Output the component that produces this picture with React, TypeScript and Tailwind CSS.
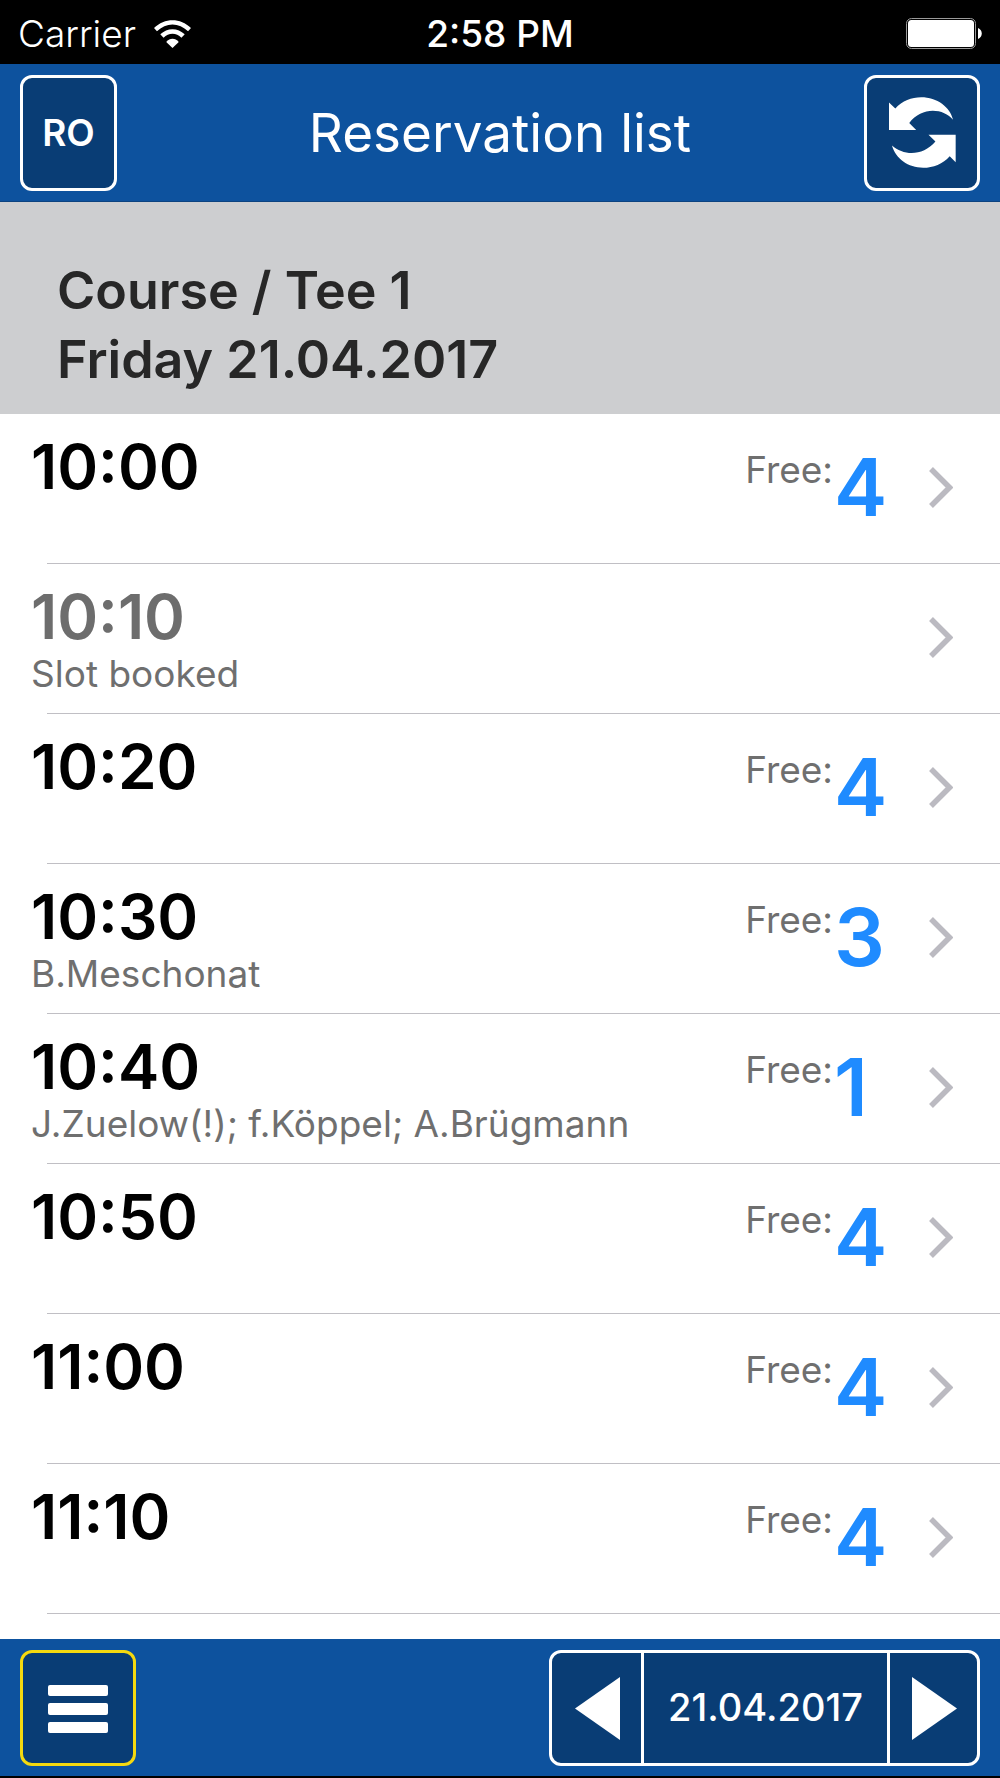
type Slot = { time: string; note?: string; free?: number; booked?: boolean };

const slots: Slot[] = [
  { time: "10:00", free: 4 },
  { time: "10:10", note: "Slot booked", booked: true },
  { time: "10:20", free: 4 },
  { time: "10:30", note: "B.Meschonat", free: 3 },
  { time: "10:40", note: "J.Zuelow(!); f.Köppel; A.Brügmann", free: 1 },
  { time: "10:50", free: 4 },
  { time: "11:00", free: 4 },
  { time: "11:10", free: 4 },
];

function WifiIcon() {
  return (
    <svg viewBox="0 0 112 84" className="h-7 w-[37px]" fill="currentColor" aria-hidden="true">
      <path d="M0 24C32-8 80-8 112 24L103 34C76 6 36 6 9 34Z" />
      <path d="M19 43C40 22 72 22 93 43L83 53C68 37 44 37 29 53Z" />
      <path d="M37 66C48 53 64 53 75 66L56 84Z" />
    </svg>
  );
}

function BatteryIcon() {
  return (
    <svg viewBox="0 0 76 31" className="h-[31px] w-[76px]" aria-hidden="true">
      <rect x="0.5" y="0.5" width="69" height="30" rx="5" fill="none" stroke="#9a9a9a" />
      <rect x="2" y="2" width="66" height="27" rx="3.5" fill="#fff" />
      <path d="M72 10C77 12 77 19 72 21Z" fill="#fff" />
    </svg>
  );
}

function RefreshIcon() {
  return (
    <svg viewBox="0 0 202 213" className="h-[71px] w-[67px]" fill="currentColor" aria-hidden="true">
      <path d="M0 16L19 34C40 10 68 0 97 0C145 0 185 30 193 68C165 33 98 27 61 78L82 99H0Z" />
      <path d="M9 146C45 178 103 178 140 134L119 113H201V196L183 178C163 201 133 213 103 213C58 213 20 186 9 146Z" />
    </svg>
  );
}

function SlotRow({ slot }: { slot: Slot }) {
  return (
    <li>
      <a href={"#" + slot.time} className="flex h-[149px] pr-[47px] pl-[31px]">
        <div className="min-w-0 flex-1 pt-[23px]">
          <div className={slot.booked ? "text-[62px] leading-[60px] font-semibold text-[#6d6d6d]" : "text-[62px] leading-[60px] font-semibold text-black"}>
            {slot.time}
          </div>
          {slot.note && <div className="mt-1 truncate text-[37px] leading-[45px] text-[#6f6f6f]">{slot.note}</div>}
        </div>
        {slot.free !== undefined && (
          <div className="flex gap-px">
            <span className="pt-[34px] text-[37px] leading-[44px] text-[#6f6f6f]">Free:</span>
            <span className="w-[95px] pt-[33px] text-[80px] leading-[80px] font-semibold text-[#1f8bff]">{slot.free}</span>
          </div>
        )}
        <svg viewBox="0 0 24 41" className="mb-0.5 h-[41px] w-6 self-center" fill="none" stroke="#bbbac1" strokeWidth="5.5" aria-hidden="true">
          <path d="M2 2L20.500 20.500L2 39" />
        </svg>
      </a>
      <div className="ml-[47px] h-px bg-[#c0bfc4]" />
    </li>
  );
}

export default function App() {
  return (
    <div className="flex min-h-screen flex-col bg-white font-['Inter',sans-serif]">
      <div className="grid h-16 grid-cols-3 items-center bg-black px-[18px] pt-[3px] text-white">
        <div className="flex items-center gap-[18px] text-[37px] leading-[44px]">
          <span className="font-light">Carrier</span>
          <WifiIcon />
        </div>
        <span className="text-center text-[37px] leading-[44px] font-medium">2:58 PM</span>
        <div className="flex justify-end">
          <BatteryIcon />
        </div>
      </div>

      <header className="flex h-[138px] items-center border-b border-[#0c4380] bg-[#0d529e] px-5 text-white">
        <div className="flex flex-1">
          <button type="button" className="h-[116px] w-[97px] rounded-xl border-3 border-white bg-[#093d75] text-[37px] font-semibold">
            RO
          </button>
        </div>
        <h1 className="text-[53px] leading-[64px]">Reservation list</h1>
        <div className="flex flex-1 justify-end">
          <button type="button" aria-label="Refresh" className="flex h-[116px] w-[116px] items-center justify-center rounded-xl border-3 border-white bg-[#093d75]">
            <RefreshIcon />
          </button>
        </div>
      </header>

      <h2 className="bg-[#cdced0] px-[57px] pt-[54px] pb-5 text-[52px] leading-[69px] font-semibold text-[#272727]">
        Course / Tee 1<br />
        Friday 21.04.2017
      </h2>

      <ul className="flex-1">
        {slots.map((slot) => (
          <SlotRow key={slot.time} slot={slot} />
        ))}
      </ul>

      <footer className="flex h-[139px] items-center justify-between border-b-2 border-black bg-[#0d529e] px-5 text-white">
        <button type="button" aria-label="Menu" className="flex h-[116px] w-[116px] flex-col items-center justify-center gap-[7px] rounded-xl border-3 border-[#f5d90f] bg-[#093d75] pt-0.5">
          <span className="h-[11px] w-[60px] rounded-xs bg-white" />
          <span className="h-[12px] w-[60px] rounded-xs bg-white" />
          <span className="h-[11px] w-[60px] rounded-xs bg-white" />
        </button>
        <div className="flex h-[116px] divide-x-3 divide-white rounded-xl border-3 border-white bg-[#093d75]">
          <button type="button" aria-label="Previous day" className="flex w-[92px] items-center justify-center pt-0.5 pl-0.5">
            <svg viewBox="0 0 45 63" className="h-[63px] w-[45px]" fill="currentColor" aria-hidden="true">
              <path d="M45 0V63L0 31.500Z" />
            </svg>
          </button>
          <button type="button" className="w-[246px] text-[38px] font-medium">
            21.04.2017
          </button>
          <button type="button" aria-label="Next day" className="flex w-[87px] items-center justify-center pt-0.5 pl-0.5">
            <svg viewBox="0 0 45 63" className="h-[63px] w-[45px]" fill="currentColor" aria-hidden="true">
              <path d="M0 0V63L45 31.500Z" />
            </svg>
          </button>
        </div>
      </footer>
    </div>
  );
}
